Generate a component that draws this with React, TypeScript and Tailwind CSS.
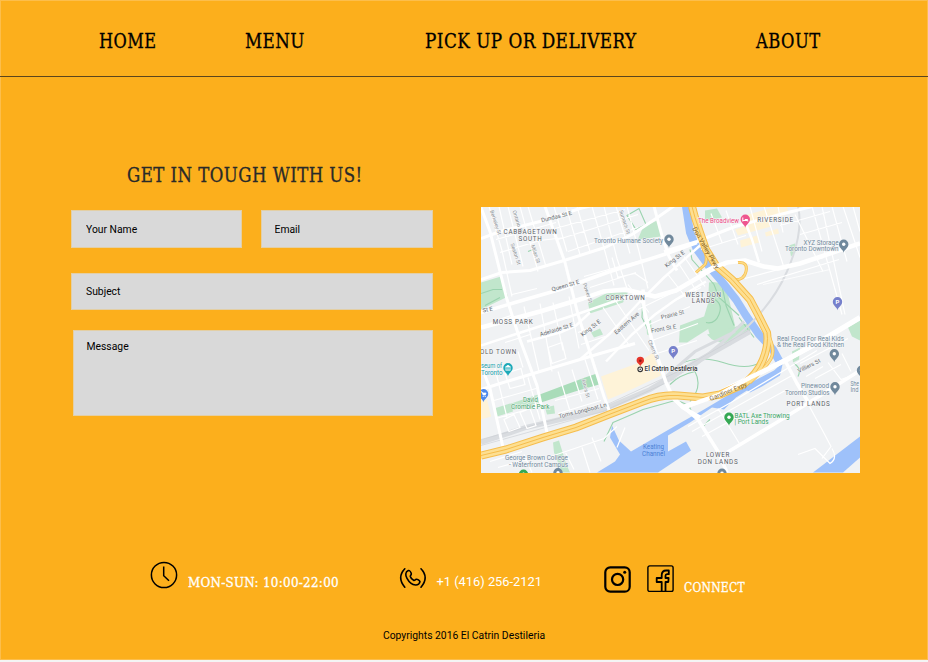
import { useLayoutEffect, useRef, useState } from "react";

/** Slab text squeezed horizontally so that it fills a fixed width. */
function Slab({ text, width, className }: { text: string; width: number; className: string }) {
  const ref = useRef<HTMLSpanElement>(null);
  const [scale, setScale] = useState(1);
  useLayoutEffect(() => {
    if (ref.current) setScale(width / ref.current.offsetWidth);
  }, [width]);
  return (
    <span className="block shrink-0" style={{ width }}>
      <span
        ref={ref}
        className={"inline-block origin-left whitespace-nowrap [-webkit-text-stroke:0.3px_currentColor] font-['DejaVu_Serif_Condensed','DejaVu_Serif',serif] " + className}
        style={{ transform: `scaleX(${scale})` }}
      >
        {text}
      </span>
    </span>
  );
}

const majorRoads: [string, number][] = [
  ["M481 239 L500 232 L540 222 L580 209 L592 206", 3],
  ["M502 273 L530 271 L564 261 L605 248 L632 235 L656 219 L676 205", 3],
  ["M664 252 L697 242 L735 227 L780 215 L812 207", 3],
  ["M481 313 L515 303 L560 290 L610 272 L664 255 L697 243", 3.5],
  ["M481 280 L502 273", 3],
  ["M481 328 L540 312 L583 299 L603 292 L625 290 L655 297 L676 291 L710 271 L727 263 L745 261 L764 267 L778 269 L800 264 L860 244", 4.5],
  ["M481 390 L500 384 L550 369 L600 354 L635 344", 3],
  ["M481 346 L530 330 L579 314 L640 293", 2.5],
  ["M527 342 L560 333 L576 326 L590 313", 2.5],
  ["M580 360 L610 334 L640 302 L664 278 L700 246", 2.5],
  ["M606 362 L632 335 L655 315 L676 300 L706 282", 2.5],
  ["M481 208 L490 232 L507 300 L520 340 L537 386 L548 438", 3],
  ["M481 366 L490 389 L503 448", 3],
  ["M545 207 L565 263 L578 315 L590 353 L604 397 L611 416", 3],
  ["M654 207 L663 240 L669 257 L677 271", 3],
  ["M643 290 L644 310 L652 341 L666 383 L674 400 L698 420 L718 452 L727 473", 3.5],
  ["M670 395 L683 408 L700 418", 4],
  ["M683 408 L720 393 L750 378 L787 360 L820 342 L860 318", 5],
  ["M784 359 L797 384 L808 402", 3.5],
  ["M727 453 L780 421 L830 390 L860 371", 3.5],
  ["M745 222 L752 240 L759 263", 2.5],
  ["M763 285 L830 270", 0.8],
];

const minorRoads =
  "M489 207l13 44 10 46M499 207l13 58M508 207l15 60M520 207l18 65M528 207l18 60M554 207l13 45M566 207l14 48M577 207l13 45M592 207l13 45 9 34M604 207l13 52 10 30M616 207l14 47M627 207l12 45 9 37M500 253l40-12 25-3M496 240l60-17M555 229l70-19M558 240l80-25M568 252l70-24M584 277l60-17M590 288l46-15M512 295l25-6M524 307l15 65M540 304l12 68M553 303l10 48M569 297l10 52M496 321l15-5M505 343l25-8M494 365l13 53M518 352l5 16M528 378l12 42M494 401l42-12M496 419l45-13M558 372l13 43M572 370l10 32M585 360l13 40M555 401l44-12M558 414l43-13M504 420l10-5 6 13-11 4zM520 413l10-4 6 17-9 3zM505 374l16-5 4 16-15 4zM548 348l14-5 4 16-14 5zM617 278l18-4 13 9M618 278l-6-20M603 308l27 39M614 299l35 52M628 285l21 28M578 333l21-8M581 345l24-8M638 310l35-17M647 326l43-19M652 341l46-17M657 354l40-13M678 263l22 34M668 275l18 23M684 257l21 30M701 288l-30 15M711 214l11 29M726 211l12 34M750 207l12 45M764 207l20 61M778 207l5 26M795 215l28 57M812 207l30 108M822 207l23 108M832 207l15 55M843 207l17 51M853 207l7 25M780 226l50-14M800 235l42-12M701 250l45-14M757 285l82-25M745 279l79-21M688 427l43-24 86-52M692 432l100-56M702 437l85-47M718 409l22 36M815 379l26-14M828 363l13 17 14-5M800 364l48-25M806 377l17-10M803 395l19 35 9 17-9 12M832 449q6 10-2 15l-15-15-17 6M551 457l53-18 13-12M565 452l9 18M582 448l8 25M592 438l9 24M617 448l8-20M490 462l32-10M498 468l38-11M524 455l8 18M842 354l9 18";

const greens = [
  "M481 283l20-6 7 20-27 13z",
  "M639 237l4-9 16-8 2 17-23 3z",
  "M588 303l20-10h20l-5 10-15 5-18 6z",
  "M494 409l16-5 3 8-16 5z",
  "M508 405l30-10 5 7-31 9zM545 408l9-2 1 8-8 1z",
  "M553 443l6-2 7 23 4 9h-8l-8-20z",
  "M705 211l12-2 5 9-17 4z",
  "M789 246l6-2 1 8-5 5z",
  "M709 283q14-3 19 12l7 31-2 11q-23 10-25-9l-6-4 6-20z",
  "M680 326l24-9 5 12-22 14h-8z",
  "M848 328l12-7v20l-8-4z",
  "M792 352l8-4-1 12-6 3z",
  "M707 335l26-7 20-6-3 10-20 14-18-6z",
  "M591 333l9-4 3 6-9 3zM646 318l5 1 1 18-5-2z",
];

const parkStrip = "M537 396l48-18 12-4 2 11-24 7-34 11zM585 378l12-4 2 11-11 3z";

const waters = [
  "M783 363l-3 13-18 11-12 6-3-2-11 7-12 12-12-2-22 15-22 13v16l18-10 5 9-33 22h-61l18-11 5-7-10-17 2-12 7 15 12 11 43-25 30-17 37-22 33-17z",
  "M813 473l47-36v21l-17 15z",
];

const expressway =
  "M481 456L506 450 543 438 576 428 609 415 643 402Q660 395 678 396L703 398 720 395 743 385Q757 375 763 360T767 333L759 317 750 300 732 280 716 266 706 250 700 233 695 218 692 207";

const streetNames: [string, number, number, number][] = [
  ["Dundas St E", 557, 219, -14],
  ["Queen St E", 566, 288, -16],
  ["Adelaide St E", 557, 332, -17],
  ["King St E", 592, 330, -38],
  ["King St E", 676, 261, -38],
  ["Eastern Ave", 628, 325, -41],
  ["Toms Longboat Ln", 583, 413, -14],
  ["Villiers St", 810, 368, -27],
  ["Prairie St", 673, 317, -14],
  ["Front St E", 664, 331, -10],
  ["Power St", 586, 294, 72],
  ["Seaton St", 514, 255, 72],
  ["Milan St", 534, 255, 72],
  ["Ontario St", 516, 222.5, 72],
  ["Berkeley St", 494, 223.5, 72],
  ["Sumach St", 623, 223, 72],
  ["Cherry St", 652, 351, 66],
  ["Jarvis St", 584, 389, 75],
  ["St E", 488, 312, -12],
];

const areaNames: [string, number, number][] = [
  ["CABBAGETOWN", 530.5, 234.5],
  ["SOUTH", 530.5, 241],
  ["MOSS PARK", 513, 324],
  ["CORKTOWN", 625.5, 300],
  ["RIVERSIDE", 775.5, 222.5],
  ["WEST DON", 703.5, 297],
  ["LANDS", 703.5, 303.3],
  ["PORT LANDS", 808.5, 406.8],
  ["LOWER", 718, 457.5],
  ["DON LANDS", 718, 464],
  ["OLD TOWN", 498.5, 354],
];

const placeNames: [string, number, number, number, string][] = [
  ["Toronto Humane Society", 594, 243.8, 69, "#71899c"],
  ["The Broadview", 698, 223.7, 41, "#ec4a87"],
  ["XYZ Storage", 803.5, 245.5, 35, "#71899c"],
  ["Toronto Downtown", 785, 251.8, 53.5, "#71899c"],
  ["Real Food For Real Kids", 777, 341.3, 67, "#71899c"],
  ["& the Real Food Kitchen", 777, 347.8, 67, "#71899c"],
  ["Pinewood", 801, 388.3, 28, "#71899c"],
  ["Toronto Studios", 785, 395, 44.5, "#71899c"],
  ["She", 850.5, 386, 8.5, "#71899c"],
  ["Ind", 850.5, 392.5, 8, "#71899c"],
  ["BATL Axe Throwing", 734.5, 418.3, 55, "#35a464"],
  ["| Port Lands", 734.5, 424.9, 34, "#35a464"],
  ["El Catrin Destileria", 644.5, 371.8, 53, "#333333"],
  ["seum of", 481, 368.3, 21, "#159eab"],
  ["Toronto", 481, 375.5, 21.5, "#159eab"],
  ["David", 523, 402.5, 15, "#44a36a"],
  ["Crombie Park", 511, 409.3, 38.5, "#44a36a"],
  ["George Brown College", 505, 460.5, 63, "#71899c"],
  ["- Waterfront Campus", 509, 467, 59, "#71899c"],
  ["Keating", 643, 449.5, 21, "#4d81d6"],
  ["Channel", 642, 456, 23, "#4d81d6"],
];

function Pin({ x, y, color, children }: { x: number; y: number; color: string; children?: React.ReactNode }) {
  return (
    <g transform={`translate(${x} ${y})`}>
      <path d="M0 7.2C-.6 4-4.7 2.8-4.7-1.2a4.7 4.7 0 1 1 9.4 0C4.700 2.800.6 4 0 7.200z" fill={color} />
      {children ?? <circle cy="-1.200" r="1.700" fill="#fff" />}
    </g>
  );
}

function CityMap() {
  return (
    <svg viewBox="481 207.500 379 266" className="block h-[266px] w-[379px] font-['Roboto',sans-serif]" preserveAspectRatio="none">
      <rect x="480" y="207" width="381" height="267" fill="#f0f2f4" />
      <path d="M741 217l25-7 20-5 3 9-20 7-18 5zM735 230l12-4 22-5 2 6-33 9zM740 241l17-5 2 7-18 5zM765 233l13-4 1 5-13 3z" fill="#fef3d8" />
      <path d="M601 377l36-13 16-11 8 23-36 17-17 7-5-16zM481 401l6-1 4 17-10 3z" fill="#fef3d8" />
      {greens.map((d) => (
        <path key={d} d={d} fill="#c1e6cc" />
      ))}
      <path d={parkStrip} fill="#a9dcb9" />
      <path d="M627 216l12-7 7 16-10 5zM481 294l12-4 9 0M485 306l15-8M528 252l5-2M643 293l-1 25 9 19M690 250l2 10 22 25 5 13 20 18M715 300q8 5 4 15t-13 8M722 286l4 20 8 20M679 365q20-10 44-2t37 0 2-28M670 385q10-10 25-13 8 15-5 30M604 442l9-19q12-5 30-13l32-9q15 3 16 10M702 428l8-8M794 364q8 5 4 13M739 318l15 20" fill="none" stroke="#9ad3ae" strokeWidth="1.100" />
      {waters.map((d) => (
        <path key={d} d={d} fill="#9ec1fa" />
      ))}
      <path d="M686 207L690 233 697 250 710 268 721 281 736 300 746 316 759 335 773 350 780 363" fill="none" stroke="#9ec1fa" strokeWidth="8" />
      <g fill="none" stroke="#d9dce0">
        <path d="M481 443L526 428 603 410 650 390 690 366 750 332" strokeWidth="5" />
        <path d="M665 378L695 352 735 332M670 380L715 350 744 322M690 370L727 339" strokeWidth="3" />
        <path d="M730 342Q770 311 787 272T798 207" strokeWidth="2" />
      </g>
      <path d="M481 440L603 407 676 373 750 330M481 446L603 412 680 377" fill="none" stroke="#c9cdd2" strokeWidth=".600" />
      <path d={minorRoads} fill="none" stroke="#fff" strokeWidth="1.200" />
      {majorRoads.map(([d, w]) => (
        <path key={d} d={d} fill="none" stroke="#fff" strokeWidth={w} strokeLinejoin="round" />
      ))}
      <g fill="none" strokeLinejoin="round">
        <path d="M704 248q4 12 1 17l-9 8M731 280q13 2 15-8t-8-9" stroke="#f6bd4c" strokeWidth="3" />
        <path d="M704 248q4 12 1 17l-9 8M731 280q13 2 15-8t-8-9" stroke="#fddc87" strokeWidth="1.500" />
        <path d={expressway} stroke="#f6bd4c" strokeWidth="8" />
        <path d="M767 333Q776 350 771 359T750 383" stroke="#f6bd4c" strokeWidth="3.500" />
        <path d={expressway} stroke="#fddf91" strokeWidth="6" />
        <path d="M767 333Q776 350 771 359T750 383" stroke="#fddf91" strokeWidth="2" />
        <path d={expressway} stroke="#f6bd4c" strokeWidth="1" />
      </g>
      <path d="M683 408L720 395 750 378 787 360 820 342" fill="none" stroke="#fff" strokeWidth="4.500" />
      <path d="M700 275L713 268 727 263" fill="none" stroke="#fff" strokeWidth="4.500" />

      {streetNames.map(([t, x, y, r]) => (
        <text key={t + x} transform={`translate(${x} ${y}) rotate(${r})`} textAnchor="middle" fontSize={r > 60 ? 5.2 : 5.9} fill={r > 60 ? "#8a8f94" : "#666b70"} stroke="#f7f8f9" strokeWidth=".8" paintOrder="stroke">
          {t}
        </text>
      ))}
      <text transform="translate(704 249.500) rotate(60)" textAnchor="middle" fontSize="6.500" fill="#80632e">Don Valley Pkwy</text>
      <text transform="translate(729 394) rotate(-22)" textAnchor="middle" fontSize="6.500" fill="#80632e">Gardiner Expy</text>
      {areaNames.map(([t, x, y]) => (
        <text key={t} x={x} y={y} textAnchor="middle" fontSize="6.300" letterSpacing=".7" fill="#5b6167" stroke="#f7f8f9" strokeWidth="1" paintOrder="stroke">
          {t}
        </text>
      ))}
      {placeNames.map(([t, x, y, w, c]) => (
        <text key={t} x={x} y={y} textLength={w} lengthAdjust="spacingAndGlyphs" fontSize="6.700" fill={c} stroke={c === "#4d81d6" ? "none" : "#f7f8f9"} strokeWidth=".9" paintOrder="stroke" fontWeight={c === "#333333" ? 500 : 400}>
          {t}
        </text>
      ))}

      <Pin x={669} y={241} color="#71899c" />
      <Pin x={843.700} y={246} color="#71899c" />
      <Pin x={834.300} y={355.500} color="#71899c" />
      <Pin x={835} y={388.500} color="#71899c" />
      <Pin x={861.500} y={372} color="#71899c" />
      <Pin x={722} y={475} color="#71899c" />
      <Pin x={558} y={474.500} color="#71899c" />
      <Pin x={523.500} y={476} color="#35a853" />
      <Pin x={729} y={419} color="#35a853" />
      <Pin x={745.300} y={221} color="#ee5590">
        <path d="M-2.500-3v4M-2.500 0H2.500V1M-.500-1H2.500" stroke="#fff" strokeWidth="1" fill="none" />
      </Pin>
      <Pin x={508} y={369.500} color="#1ba9b8">
        <path d="M-2.500-2L0-3.800 2.500-2zM-2-1.500V1M0-1.500V1M2-1.500V1M-2.500 1.200h5" stroke="#fff" strokeWidth=".8" fill="#fff" />
      </Pin>
      <Pin x={483.500} y={395.500} color="#4d89ec">
        <path d="M-2.800-3.200h1.300l.8 1.200h3.300l-.8 2h-2.200l-.8-2" stroke="#fff" strokeWidth=".7" fill="#fff" />
        <circle cx="-.3" cy="1.300" r=".6" fill="#fff" />
        <circle cx="1.700" cy="1.300" r=".6" fill="#fff" />
      </Pin>
      {[[837.5, 303.5], [673.3, 352.5]].map(([x, y]) => (
        <Pin key={x} x={x} y={y} color="#7680cb">
          <text y="1" textAnchor="middle" fontSize="6" fontWeight="700" fill="#fff">P</text>
        </Pin>
      ))}
      <path d="M640.300 367C639.800 364.300 636.600 364 636.600 361a3.700 3.700 0 1 1 7.400 0C644 364 640.800 364.300 640.300 367z" fill="#e5352b" />
      <circle cx="640.300" cy="361.200" r="1.300" fill="#8e1a18" />
      <circle cx="640.200" cy="369.800" r="2.300" fill="#fff" stroke="#333" strokeWidth="1.100" />
      <circle cx="640.200" cy="369.800" r=".8" fill="#333" />
    </svg>
  );
}

function ClockIcon() {
  return (
    <svg viewBox="0 0 28 28" className="size-7" fill="none" stroke="#000" strokeWidth="1.500">
      <circle cx="14" cy="14" r="12.600" />
      <path d="M13.700 5.500v9.300l5.300 5" />
    </svg>
  );
}

function PhoneIcon() {
  return (
    <svg viewBox="0 0 28 22" className="h-[22px] w-7" fill="none" stroke="#000" strokeWidth="1.600" strokeLinecap="round" strokeLinejoin="round">
      <path d="M5.800 1.800Q-2.400 10.500 5.800 20.200M22 1.800Q30.300 10.500 22 20.200" />
      <path d="M9.300 3.600C6.200 4.700 6.200 8.300 8 11.300C10 15 13 17.600 16.600 18C19 18.200 20.700 16.400 21 14.700C20.500 13.500 18.500 12 17.200 12.300C16.300 12.600 15.600 13.800 14.600 13.300C13.100 12.500 11.700 10.900 11.300 9.500C11.100 8.500 12.400 8 12.300 6.700C12 5 10.600 3.400 9.300 3.600Z" />
    </svg>
  );
}

function InstagramIcon() {
  return (
    <svg viewBox="0 0 27 27" className="size-[27px]" fill="none" stroke="#000" strokeWidth="2.200">
      <rect x="1.300" y="1.300" width="24.400" height="24.400" rx="5" />
      <circle cx="13.600" cy="13.400" r="5.600" />
      <circle cx="20.700" cy="6.200" r="1.500" fill="#000" stroke="none" />
    </svg>
  );
}

function FacebookIcon() {
  return (
    <svg viewBox="0 0 27 27" className="size-[27px]" fill="none" stroke="#000" strokeWidth="1.400" strokeLinejoin="round">
      <rect x=".900" y=".900" width="25.200" height="25.600" rx="1.800" />
      <path d="M14.700 26V17H9.700V13H14.700V10.300C14.700 7 16.700 5.500 19.200 5.500H21.800V9.200H20C18.900 9.200 18.500 9.800 18.500 10.800V13H21.600L21.300 17H18.500V26" strokeWidth="1.800" />
    </svg>
  );
}

const field = "block resize-none appearance-none border border-[#e3cfa5] bg-[#d9d9d9] text-[10.35px] leading-[14px] text-black placeholder:text-black placeholder:opacity-100 outline-none";

export default function App() {
  return (
    <div className="flex h-[662px] w-[928px] flex-col overflow-hidden bg-[#f4f4f4] font-['Roboto',sans-serif]">
      <div className="flex h-[660px] flex-col border border-[#fcbe4c] bg-[#fcaf1c]">
        <header className="-mx-px h-[76px] shrink-0 border-b border-[#5b451c] pt-[28px]">
          <nav className="flex pl-[98.5px] text-black">
            <Slab text="HOME" width={57.5} className="text-[20px] leading-6 tracking-[.5px]" />
            <div className="w-[89px]" />
            <Slab text="MENU" width={59.5} className="text-[20px] leading-6 tracking-[.5px]" />
            <div className="w-[120.5px]" />
            <Slab text="PICK UP OR DELIVERY" width={211.5} className="text-[20px] leading-6 tracking-[.5px]" />
            <div className="w-[119.5px]" />
            <Slab text="ABOUT" width={64.5} className="text-[20px] leading-6 tracking-[.5px]" />
          </nav>
        </header>

        <main className="flex h-[396px] shrink-0 items-start pl-[70px]">
          <form className="w-[362px] pt-[86px]">
            <h1 className="pl-[56px] text-[#292a29]">
              <Slab text="GET IN TOUGH WITH US!" width={236} className="text-[20px] leading-6 tracking-[.5px]" />
            </h1>
            <div className="mt-[21px] flex justify-between">
              <input className={field + " h-[38px] w-[171px] pl-[14px]"} placeholder="Your Name" />
              <input className={field + " h-[38px] w-[172px] pl-[12.5px]"} placeholder="Email" />
            </div>
            <input className={field + " mt-[25px] h-[37px] w-full pl-[14px]"} placeholder="Subject" />
            <textarea className={field + " ml-[2px] mt-[20px] h-[86px] w-[360px] pl-[12.5px] pt-[9px]"} placeholder="Message" />
          </form>
          <div className="ml-[48px] mt-[130px]">
            <CityMap />
          </div>
        </main>

        <footer className="flex h-[186px] flex-col">
          <div className="flex h-[60px] items-start pl-[149px] pt-[88px] text-white">
            <ClockIcon />
            <div className="ml-[9.500px] mt-[9px]">
              <Slab text="MON-SUN: 10:00-22:00" width={151} className="text-[13.5px] leading-[18px] tracking-[.3px]" />
            </div>
            <div className="ml-[60.5px] mt-[6px]">
              <PhoneIcon />
            </div>
            <p className="ml-[9.5px] mt-[12px] w-[167.5px] text-[12.85px] leading-[18px]">+1 (416) 256-2121</p>
            <div className="mt-[5px]">
              <InstagramIcon />
            </div>
            <div className="ml-[16px] mt-[4px]">
              <FacebookIcon />
            </div>
            <div className="ml-[10px] mt-[14px]">
              <Slab text="CONNECT" width={61} className="text-[13.5px] leading-[18px] tracking-[.3px]" />
            </div>
          </div>
          <p className="mt-[68px] text-center text-[10.35px] leading-[14px] text-black">Copyrights 2016 El Catrin Destileria</p>
        </footer>
      </div>
    </div>
  );
}
